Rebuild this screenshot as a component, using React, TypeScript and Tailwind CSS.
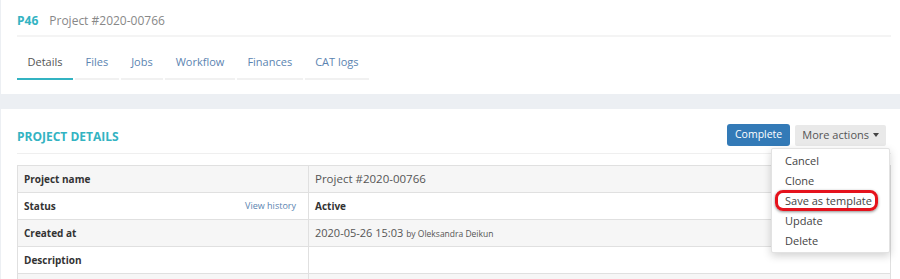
import React from 'react';

const tabs = [
  { label: 'Details', active: true },
  { label: 'Files' },
  { label: 'Jobs' },
  { label: 'Workflow' },
  { label: 'Finances' },
  { label: 'CAT logs' },
];

const actions = ['Cancel', 'Clone', 'Save as template', 'Update', 'Delete'];

const App: React.FC = () => {
  return (
    <div
      className="h-screen overflow-hidden bg-[#eceff3] text-[12px] text-[#555]"
      style={{ fontFamily: '"Open Sans", "Liberation Sans", sans-serif' }}
    >
      {/* top card */}
      <div className="ml-px bg-white pl-4 pr-[9px] pb-[14px]">
        <div className="flex items-center gap-[11px] border-b-2 border-[#f4f4f4] pt-[12px] pb-[5px] leading-[18px]">
          <span className="text-[12px] font-bold text-[#33b3c2]">P46</span>
          <span className="text-[#888]">Project #2020-00766</span>
        </div>
        <div className="flex">
          {tabs.map((tab) => (
            <div
              key={tab.label}
              className={`mr-[2px] border-b-2 px-[10.5px] pt-[16px] pb-[7px] text-[11px] leading-[18px] ${
                tab.active ? 'border-[#33b3c2] text-[#555]' : 'border-[#f1f1f1] text-[#5b84b1]'
              }`}
            >
              {tab.label}
            </div>
          ))}
        </div>
      </div>

      <div className="h-[15px]" />

      {/* project details card */}
      <div className="ml-px bg-white pl-4 pr-[9px] pb-4">
        <div className="flex items-center justify-between border-b border-[#efefef] pt-[15px] pb-[7px]">
          <h2 className="mt-[4px] text-[12px] font-bold uppercase text-[#33b3c2]">Project details</h2>
          <div className="relative mr-[5px] flex items-center gap-[5px]">
            <button className="flex h-[22px] items-center rounded-[3px] bg-[#337ab7] px-[8px] text-[10.5px] text-white">
              Complete
            </button>
            <button className="flex h-[21px] items-center gap-[4px] rounded-[2px] bg-[#e9e9e9] px-[7px] text-[11px] text-[#555]">
              More actions
              <span className="inline-block h-0 w-0 border-x-[3.5px] border-t-[4px] border-x-transparent border-t-[#444]" />
            </button>

            <div className="absolute right-[-4px] top-[24px] z-10 w-[119px] rounded-[2px] border border-[#e2e2e2] bg-white pt-[2px] pb-[1px] shadow-[0_3px_8px_rgba(0,0,0,0.18)]">
              {actions.map((a) => (
                <div key={a} className="flex h-[20px] items-center whitespace-nowrap px-[13px] text-[11px] text-[#444]">
                  {a}
                </div>
              ))}
              <div className="absolute left-[3px] top-[41px] h-[21px] w-[103px] rounded-[8px] border-[3px] border-[#e5121c] shadow-[0_1px_3px_rgba(0,0,0,0.45)]" />
            </div>
          </div>
        </div>

        <table className="mt-[11px] w-full border-collapse text-[12px]">
          <tbody>
            <tr className="h-[27px] bg-[#f6f6f6]">
              <td className="w-[291px] border border-[#e0e0e0] px-[6px] text-[10px] font-bold text-[#333]">Project name</td>
              <td className="border border-[#e0e0e0] px-[6px] text-[11.5px] text-[#555]">Project #2020-00766</td>
            </tr>
            <tr className="h-[27px] bg-white">
              <td className="border border-[#e0e0e0] pl-[6px] pr-[12px]">
                <div className="flex items-center justify-between">
                  <span className="text-[10px] font-bold text-[#333]">Status</span>
                  <span className="text-[9px] text-[#5b84b1]">View history</span>
                </div>
              </td>
              <td className="border border-[#e0e0e0] px-[6px] text-[10px] font-bold text-[#333]">Active</td>
            </tr>
            <tr className="h-[27px] bg-[#f6f6f6]">
              <td className="border border-[#e0e0e0] px-[6px] text-[10px] font-bold text-[#333]">Created at</td>
              <td className="border border-[#e0e0e0] px-[6px] text-[11px] text-[#555]">
                2020-05-26 15:03 <span className="text-[8.5px]">by Oleksandra Deikun</span>
              </td>
            </tr>
            <tr className="h-[27px] bg-white">
              <td className="border border-[#e0e0e0] px-[6px] text-[10px] font-bold text-[#333]">Description</td>
              <td className="border border-[#e0e0e0] px-[6px]" />
            </tr>
            <tr className="h-[27px] bg-[#f6f6f6]">
              <td className="border border-[#e0e0e0] px-[6px]" />
              <td className="border border-[#e0e0e0] px-[6px]" />
            </tr>
          </tbody>
        </table>
      </div>
    </div>
  );
};

export default App;
